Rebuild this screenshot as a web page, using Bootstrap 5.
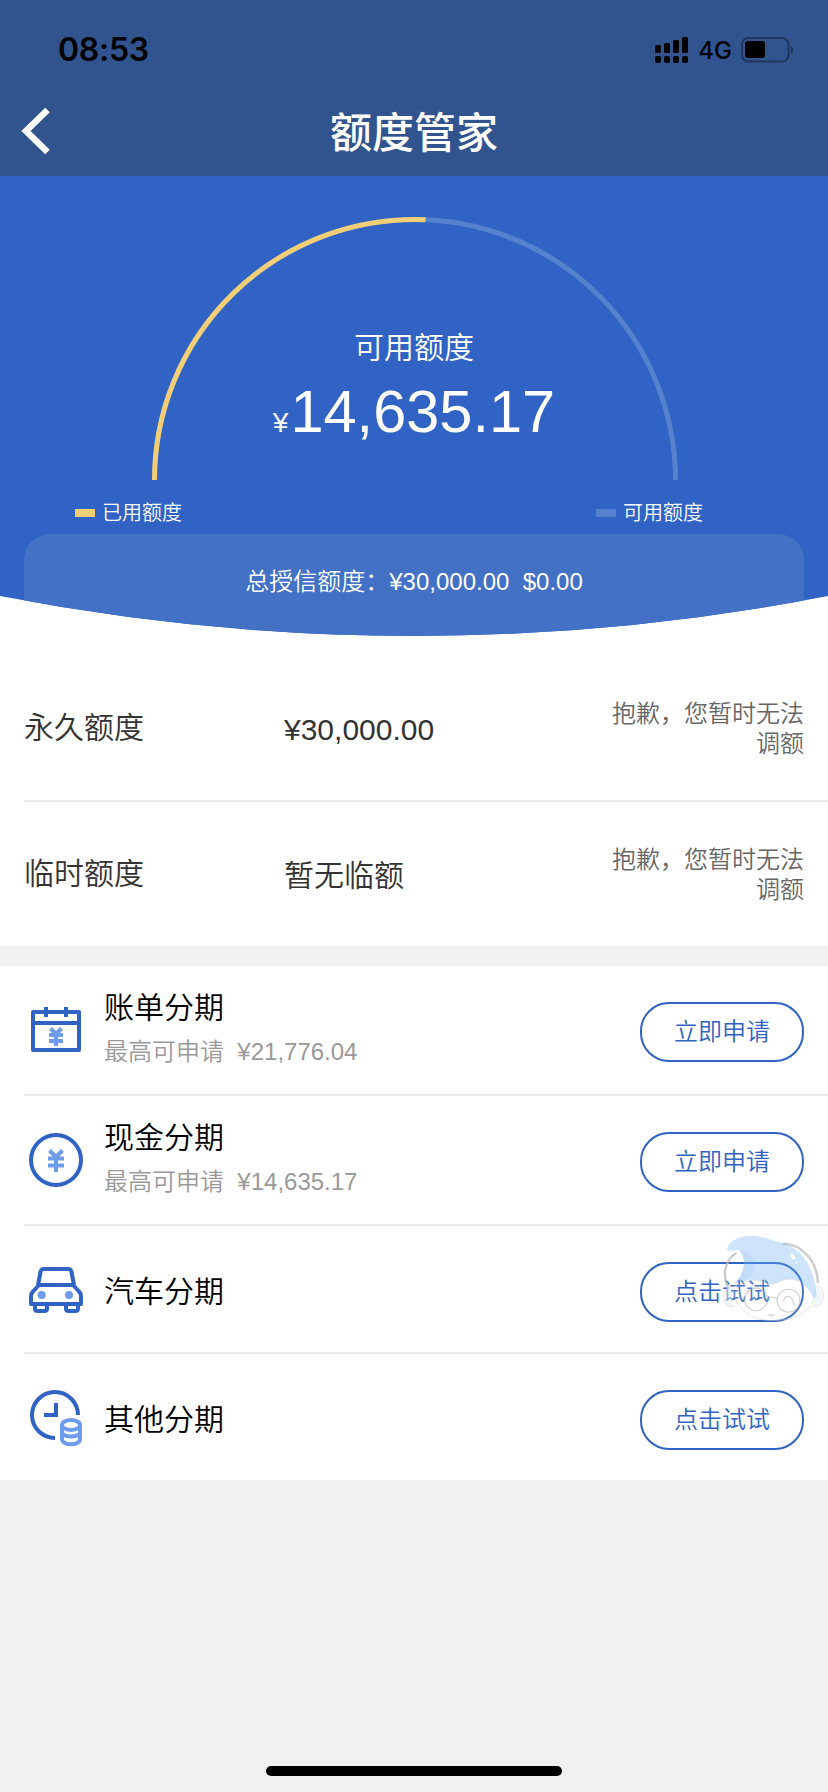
<!DOCTYPE html>
<html lang="zh-CN">
<head>
<meta charset="utf-8">
<meta name="viewport" content="width=device-width, initial-scale=1">
<title>额度管家</title>
<link href="https://cdn.jsdelivr.net/npm/bootstrap@5.3.0/dist/css/bootstrap.min.css" rel="stylesheet">
<style>
  body { font-family: "Liberation Sans", "Noto Sans CJK SC", sans-serif; font-weight: 350; background: #f1f1f1; color: #000; height: 1792px; overflow: hidden; }
  .topbar { background: #31548f; height: 176px; }
  .status { height: 100px; padding: 0 33px 0 58px; }
  .clock { font-family: Inter, sans-serif; font-weight: 600; font-size: 32px; line-height: 40px; letter-spacing: -.3px; }
  .net { font-family: Inter, sans-serif; font-weight: 500; font-size: 24px; line-height: 30px; margin: 2px 9px 0 9px; }
  .titlebar { height: 76px; padding-left: 20px; }
  .titlebar h1 { font-size: 42px; font-weight: 500; line-height: 60px; padding-top: 4px; }
  .back { margin-top: 6px; }
  .hero { background: #3063c4; height: 460px; clip-path: path("M0 0H828V420Q414 500 0 420Z"); }
  .gauge { height: 304px; }
  .avail { font-size: 30px; line-height: 40px; padding-top: 152px; }
  .amount { font-size: 59.500px; line-height: 70px; margin-top: 9px; }
  .amount small { font-size: 28px; margin-right: 2px; }
  .legend { height: 54px; padding: 11px 125px 0 75px; font-size: 20px; line-height: 30px; }
  .legend span { margin-left: -1px; }
  .swatch { width: 20px; height: 8px; background: #f2ce77; }
  .swatch.free { background: #5582cf; }
  .total { margin: 0 24px; height: 102px; padding-top: 33px; background: #4271c6; border-radius: 26px 26px 0 0; font-size: 24px; line-height: 30px; white-space: pre; }
  .underlay { height: 40px; margin-top: -40px; }
  .quota { color: #333; font-size: 30px; padding-top: 20px; }
  .quota .line { margin-left: 24px; padding-right: 24px; height: 144px; }
  .quota .line + .line, .plans .line + .line { border-top: 2px solid #ebebeb; box-sizing: content-box; }
  .quota .name { width: 260px; padding-bottom: 2px; }
  .quota .val { padding-top: 2px; }
  .quota .note { width: 200px; font-size: 24px; line-height: 30px; color: #666; padding-top: 1px; }
  .plans { margin-top: 20px; }
  .plans .line { margin-left: 24px; padding-right: 24px; height: 128px; }
  .plans .line.short { height: 126px; }
  .plans .ico { width: 60px; height: 60px; margin: 2px 18px 0 2px; }
  .plans .name { font-size: 30px; line-height: 40px; }
  .short .name { padding-top: 6px; }
  .plans .sub { font-size: 24px; line-height: 30px; color: #999; margin: 9px 0 5px; white-space: pre; }
  .btn-apply { width: 164px; height: 60px; border: 2px solid #3063c4; border-radius: 29px; color: #3063c4; font-size: 24px; font-weight: 350; line-height: 30px; padding: 0; background: transparent; margin-top: 4px; }
  .short .btn-apply { margin-top: 6px; }
  .mascot { right: 2px; top: 8px; width: 106px; height: 88px; pointer-events: none; }
  .homebar { width: 296px; height: 10px; bottom: 16px; background: #000; border-radius: 5px; }
</style>
</head>
<body class="position-relative">
<header class="topbar">
  <div class="status d-flex align-items-center justify-content-between">
    <div class="clock">08:53</div>
    <div class="d-flex align-items-center">
      <svg width="34" height="28" viewBox="0 0 34 28"><rect x="0" y="9" width="6" height="8" rx="1.500"/><rect x="9" y="7" width="6" height="10" rx="1.500"/><rect x="18" y="4" width="6" height="13" rx="1.500"/><rect x="27" y="1" width="6" height="16" rx="1.500"/><rect x="0" y="20" width="6" height="7" rx="2"/><rect x="9" y="20" width="6" height="7" rx="2"/><rect x="18" y="20" width="6" height="7" rx="2"/><rect x="27" y="20" width="6" height="7" rx="2"/></svg>
      <div class="net">4G</div>
      <svg width="54" height="26" viewBox="0 0 54 26"><rect x="1" y="1" width="46.500" height="23.500" rx="6.500" fill="none" stroke="#1f355c" stroke-width="2"/><rect x="4" y="4" width="20" height="17" rx="3"/><path d="M50 9a4.500 4.500 0 0 1 0 8z" fill="#1f355c"/></svg>
    </div>
  </div>
  <div class="titlebar d-flex position-relative">
    <svg class="back" width="32" height="50" viewBox="0 0 32 50"><path d="M27.500 4L6 25L27.500 46" fill="none" stroke="#fff" stroke-width="6.500"/></svg>
    <h1 class="position-absolute top-0 start-0 w-100 text-center text-white m-0">额度管家</h1>
  </div>
</header>

<section class="hero text-white">
  <div class="gauge position-relative text-center">
    <svg class="position-absolute top-0 start-0" width="828" height="304" viewBox="0 0 828 304" fill="none" stroke-width="5"><path d="M154.500 304A260.500 260.500 0 0 1 675.500 304" stroke="#5582cf"/><path d="M154.500 304A260.500 260.500 0 0 1 425.500 43.700" stroke="#f2ce77"/></svg>
    <div class="avail">可用额度</div>
    <div class="amount"><small>¥</small>14,635.17</div>
  </div>
  <div class="legend d-flex justify-content-between align-items-center">
    <div class="d-flex align-items-center gap-2"><i class="swatch"></i><span>已用额度</span></div>
    <div class="d-flex align-items-center gap-2"><i class="swatch free"></i><span>可用额度</span></div>
  </div>
  <div class="total text-center">总授信额度：¥30,000.00  $0.00</div>
</section>

<!-- white ground below the curved edge of the hero -->
<div class="underlay bg-white"></div>
<section class="quota bg-white">
  <div class="line d-flex align-items-center"><div class="name">永久额度</div><div class="val">¥30,000.00</div><div class="note text-end ms-auto">抱歉，您暂时无法调额</div></div>
  <div class="line d-flex align-items-center"><div class="name">临时额度</div><div class="val">暂无临额</div><div class="note text-end ms-auto">抱歉，您暂时无法调额</div></div>
</section>

<section class="plans bg-white">
  <div class="line d-flex align-items-center">
    <svg class="ico" viewBox="0 0 60 60" fill="none" stroke="#3063c4" stroke-width="4" stroke-linejoin="round"><path d="M7 11H53V49H7zM7 22H53M20 6V16M40 6V16"/><path d="M24.500 27.500L30 33L35.500 27.500M30 33V45M23 34H37M23 40H37" stroke="#6d9cec"/></svg>
    <div><div class="name">账单分期</div><div class="sub">最高可申请  ¥21,776.04</div></div>
    <button class="btn-apply ms-auto">立即申请</button>
  </div>
  <div class="line d-flex align-items-center">
    <svg class="ico" viewBox="0 0 60 60" fill="none" stroke="#3063c4" stroke-width="4"><circle cx="30" cy="29" r="25"/><path d="M23.500 19.500L30 26L36.500 19.500M30 26V41M22 27.500H38M22 34.500H38" stroke="#6d9cec"/></svg>
    <div><div class="name">现金分期</div><div class="sub">最高可申请  ¥14,635.17</div></div>
    <button class="btn-apply ms-auto">立即申请</button>
  </div>
  <div class="line short d-flex align-items-center position-relative">
    <svg class="ico" viewBox="0 0 60 60" fill="none" stroke="#3063c4" stroke-width="4" stroke-linejoin="round"><path d="M12 25L14.500 12Q15 9 18 9H42Q45 9 45.500 12L48 25M13 25H47L53 31.500Q55 33.500 55 36V44H5V36Q5 33.500 7 31.500zM9 45V48.500Q9 51 11.500 51H18.500Q21 51 21 48.500V45M40 45V48.500Q40 51 42.500 51H49.500Q52 51 52 48.500V45"/><g fill="#6d9cec" stroke="none"><circle cx="15.700" cy="35" r="4"/><circle cx="43" cy="35" r="4"/></g></svg>
    <div class="name">汽车分期</div>
    <button class="btn-apply ms-auto">点击试试</button>
    <svg class="mascot position-absolute" viewBox="60 42 318 264" fill="none">
      <path d="M110 98C76 118 64 165 86 205M248 71C305 72 352 122 354 190" stroke="#bbb" stroke-opacity=".75" stroke-width="7"/>
      <path d="M92 203C72 205 66 225 74 245C80 260 92 262 102 260M345 200C365 195 376 215 370 238C364 256 352 262 340 258" stroke="#ddd" stroke-opacity=".45" stroke-width="4" fill="#e4f2f8" fill-opacity=".5"/>
      <path d="M100 200C100 255 140 300 215 302C290 300 335 275 342 232C320 195 300 180 275 178C245 172 230 200 195 190C160 172 130 185 100 200Z" fill="#fff" fill-opacity=".12" stroke="#d8c8cc" stroke-opacity=".5" stroke-width="3"/>
      <path d="M82 92C80 70 110 48 150 48C190 46 215 62 245 68C310 85 346 150 350 232L343 234C322 195 300 178 275 178C245 172 230 200 195 188C160 172 130 185 103 190C135 160 140 115 120 94C110 84 95 96 82 92Z" fill="#6db1f5" fill-opacity=".34"/>
      <path d="M103 190C135 160 140 115 120 94C140 90 165 110 163 140C162 165 145 178 130 181Z" fill="#6c9be6" fill-opacity=".12"/>
      <g fill="#fff"><ellipse cx="278" cy="110" rx="6" ry="10" transform="rotate(-35 278 110)"/><circle cx="289" cy="128" r="3.500"/></g>
      <g stroke="#aaa" stroke-opacity=".5" stroke-width="4"><circle cx="168" cy="238" r="34"/><circle cx="266" cy="242" r="34"/><path d="M202 236Q216 226 232 238M251 244C253 224 276 224 279 246L285 257M206 283Q215 289 223 284"/></g>
    </svg>
  </div>
  <div class="line short d-flex align-items-center">
    <svg class="ico" viewBox="0 0 60 60" fill="none" stroke="#3063c4" stroke-width="4"><path d="M52 27A23 23 0 1 0 29 50M30 15V27H18"/><g stroke="#6d9cec"><path d="M36 37V51C36 58 54 58 54 51V37M36 44C36 50 54 50 54 44"/><ellipse cx="45" cy="37" rx="9" ry="5"/></g></svg>
    <div class="name">其他分期</div>
    <button class="btn-apply ms-auto">点击试试</button>
  </div>
</section>
<div class="homebar position-absolute start-50 translate-middle-x"></div>
<script src="https://cdn.jsdelivr.net/npm/bootstrap@5.3.0/dist/js/bootstrap.bundle.min.js"></script>
</body>
</html>
